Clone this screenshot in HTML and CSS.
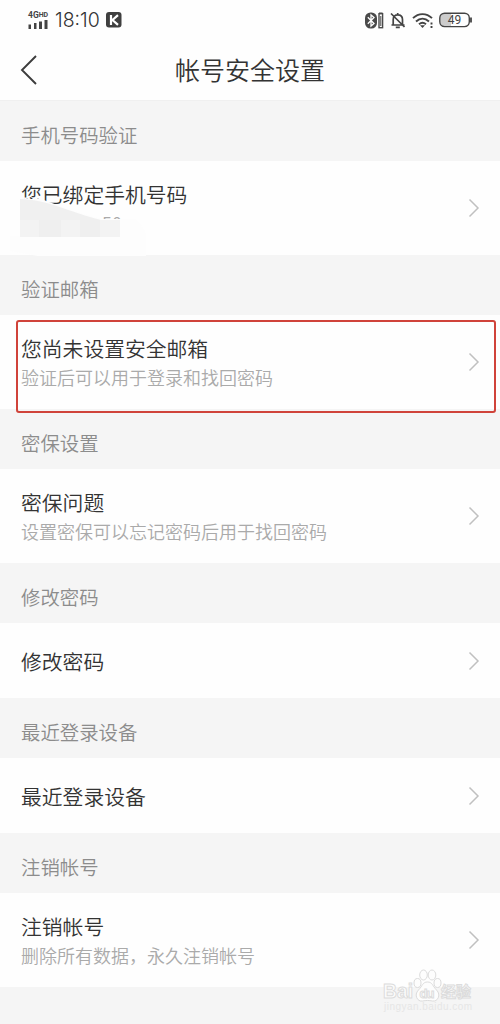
FILE: index.html
```html
<!DOCTYPE html>
<html lang="zh-CN">
<head>
  <meta charset="UTF-8" />
  <title>帐号安全设置</title>
  <link rel="stylesheet" href="styles.css">
</head>
<body>
  <svg width="0" height="0" class="defs">
    <symbol id="chevron" viewBox="0 0 12 20">
      <path d="M1.500 1.500 10 10 1.500 18.500" fill="none" stroke="#c0c0c0" stroke-width="1.500" />
    </symbol>
  </svg>

  <header class="header">
    <div class="status">
      <div class="network">
        <span class="network-type">4G<small>HD</small></span>
        <svg width="20" height="9" viewBox="0 0 20 9" fill="#444">
          <path d="M0.500 4.500H3V9H0.500zM6 3h2.500v6H6zM11 1.500h3V9h-3zM16.500 0h3v9h-3z" />
        </svg>
      </div>
      <span class="time">18:10</span>
      <svg class="app-icon" width="16" height="16" viewBox="0 0 16 16">
        <rect width="15.500" height="15.500" rx="3" fill="#3f3f3f" />
        <path d="M5 3v10M12 3.200 6.500 8 12 12.800" fill="none" stroke="#fff" stroke-width="2.200" />
      </svg>
      <div class="status-right">
        <svg width="19" height="17" viewBox="0 0 19 17">
          <rect x="0" y="0.500" width="12" height="16" rx="5.500" fill="#4a4a4a" />
          <path d="M2.800 5.200 9 11.500 6 14V3l3 2.500-6.200 6.300" fill="none" stroke="#fff" stroke-width="1.300" />
          <rect x="14" y="1.700" width="3.600" height="14" fill="none" stroke="#4a4a4a" stroke-width="1.400" />
          <path d="M15.800 4v10M14 1h3.600" stroke="#4a4a4a" stroke-width="1" />
        </svg>
        <svg class="bell" width="16" height="17" viewBox="0 0 16 17" fill="none" stroke="#444" stroke-width="1.700">
          <path d="M1.500 13h13M3.200 13V7.500C3.200 4.500 5 2.800 7.700 2.800s4.800 1.700 4.800 4.700V13M7.700 1v2M5.800 15.300h4M1 1.500 14.500 15" />
        </svg>
        <svg class="wifi" width="22" height="17" viewBox="0 0 22 17" fill="none" stroke="#444" stroke-width="1.900">
          <path d="M1 6.200C6.500 0.700 14.500 0.700 20 6.200M4 9.500c4-3.800 9-3.800 13 0M7 12.300c2.200-1.900 4.800-1.900 7 0" />
          <path d="M8 13.200h5L10.500 16z" fill="#444" stroke="none" />
          <path d="M19.500 10.500v2M19.500 14v2" />
        </svg>
        <svg width="34" height="16" viewBox="0 0 34 16">
          <path d="M6 1.500h6v13H6A5 5 0 0 1 1.500 8 5 5 0 0 1 6 1.500z" fill="#ccc" />
          <rect x="0.800" y="1.200" width="29.500" height="13.400" rx="4.800" fill="none" stroke="#444" stroke-width="1.400" />
          <path d="M32 5.500v5" stroke="#444" stroke-width="1.800" />
          <text x="15.500" y="12.300" class="battery-text" text-anchor="middle">49</text>
        </svg>
      </div>
    </div>
    <div class="nav">
      <svg class="back" width="18" height="30" viewBox="0 0 18 30">
        <path d="M16 1 2 15l14 14" fill="none" stroke="#3c3c3c" stroke-width="1.900" />
      </svg>
      <h1>帐号安全设置</h1>
    </div>
  </header>

  <main>
    <h2>手机号码验证</h2>
    <div class="row">
      <div class="row-text">
        <div class="title">您已绑定手机号码</div>
        <div class="sub phone">50</div>
      </div>
      <svg class="arrow"><use href="#chevron" /></svg>
      <!-- hides the phone number -->
      <svg class="mask" width="140" height="64" viewBox="0 0 140 64">
        <path d="M10 3h21l30 11 30 9h33q9 6 12 17v20H28L0 55V40h10z" fill="#fdfdfd" />
        <path d="M10 3C40 4 55 15 91 24H110v17H10z" fill="#f0f0f0" />
        <path d="M10 24h100v17H10z" fill="#f3f3f3" />
        <path d="M29 24h22v17H29zM70 24h20v17H70z" fill="#efefef" />
      </svg>
    </div>

    <h2>验证邮箱</h2>
    <div class="row">
      <div class="row-text">
        <div class="title">您尚未设置安全邮箱</div>
        <div class="sub">验证后可以用于登录和找回密码</div>
      </div>
      <svg class="arrow"><use href="#chevron" /></svg>
      <div class="highlight"></div>
    </div>

    <h2>密保设置</h2>
    <div class="row">
      <div class="row-text">
        <div class="title">密保问题</div>
        <div class="sub">设置密保可以忘记密码后用于找回密码</div>
      </div>
      <svg class="arrow"><use href="#chevron" /></svg>
    </div>

    <h2>修改密码</h2>
    <div class="row single">
      <div class="title">修改密码</div>
      <svg class="arrow"><use href="#chevron" /></svg>
    </div>

    <h2>最近登录设备</h2>
    <div class="row single">
      <div class="title">最近登录设备</div>
      <svg class="arrow"><use href="#chevron" /></svg>
    </div>

    <h2>注销帐号</h2>
    <div class="row">
      <div class="row-text">
        <div class="title">注销帐号</div>
        <div class="sub">删除所有数据，永久注销帐号</div>
      </div>
      <svg class="arrow"><use href="#chevron" /></svg>
    </div>
  </main>

  <svg class="watermark" width="96" height="50" viewBox="0 0 96 50">
    <g fill="#fdfdfd" stroke="#dcdcdc" stroke-width="1">
      <text x="2" y="32" class="wm-logo" textLength="30" lengthAdjust="spacingAndGlyphs">Bai</text>
      <ellipse cx="36.500" cy="17" rx="3.500" ry="4.500" />
      <ellipse cx="42.500" cy="9" rx="3.800" ry="5" />
      <ellipse cx="51" cy="9" rx="3.800" ry="5" />
      <ellipse cx="56.500" cy="17" rx="3.500" ry="4.500" />
      <path d="M46.500 16c5 0 5 4 9 8 5 5 1 12-4 11-4-.7-6-.7-10 0-5 1-9-6-4-11 4-4 4-8 9-8z" />
      <text x="38.500" y="32" class="wm-du" textLength="15">du</text>
      <text x="60" y="31" class="wm-cn" textLength="30">经验</text>
    </g>
    <text x="3" y="44" class="wm-url" textLength="88">jingyan.baidu.com</text>
  </svg>
</body>
</html>
```
FILE: styles.css
```css
* {
  box-sizing: border-box;
}
body {
  margin: 0;
  height: 1024px;
  position: relative;
  overflow: hidden;
  background: #f5f5f5;
  color: #333;
  font-family: "Noto Sans CJK SC", sans-serif;
  font-weight: 350;
}
svg {
  display: block;
  flex-shrink: 0;
}
.defs {
  position: absolute;
}
h1, h2 {
  margin: 0;
  font-weight: 350;
}
.header {
  height: 101px;
  background: #fefefe;
  border-bottom: 1px solid #f0f0f0;
}
.status {
  display: flex;
  align-items: center;
  height: 40px;
  padding: 0 27px 0 28px;
}
.network {
  width: 21px;
}
.network-type {
  display: block;
  margin-bottom: 1px;
  font: bold 8.5px/8px Roboto, sans-serif;
  color: #444;
  white-space: nowrap;
}
.network-type small {
  font-size: 7px;
  vertical-align: 1px;
}
.time {
  width: 45px;
  margin-left: 6px;
  font: 19.5px/40px Inter, sans-serif;
  font-weight: 300;
  letter-spacing: 0;
}
.app-icon {
  margin-left: 6px;
}
.status-right {
  display: flex;
  align-items: center;
  margin-left: auto;
}
.bell {
  margin-left: 6px;
}
.wifi {
  margin: 0 5px 0 6px;
}
.battery-text {
  font: 12px Roboto, sans-serif;
  fill: #444;
}
.nav {
  display: grid;
  grid-template-columns: 40px 1fr 40px;
  align-items: center;
  height: 60px;
  padding: 0 20px;
}
h1 {
  font-size: 25px;
  line-height: 58px;
  padding-bottom: 2px;
  text-align: center;
}
h2 {
  height: 60px;
  padding: 7px 21px 0;
  font-size: 19.4px;
  line-height: 53px;
  color: #8c8c8c;
}
.row {
  position: relative;
  display: flex;
  align-items: center;
  justify-content: space-between;
  height: 94px;
  padding: 0 20px 0 21px;
  background: #fefefe;
}
.row.single {
  height: 75px;
}
.title {
  font-size: 20.8px;
  line-height: 30px;
}
.sub {
  font-size: 18px;
  line-height: 28px;
  color: #aaa;
}
.phone {
  padding-left: 81px;
}
.arrow {
  width: 12px;
  height: 20px;
}
.mask {
  position: absolute;
  left: 10px;
  top: 35px;
}
/* red frame around the mailbox row */
.highlight {
  position: absolute;
  top: 5px;
  left: 16px;
  right: 4px;
  height: 93px;
  border: 2px solid #d0433a;
  border-radius: 3px;
  z-index: 1;
}
.watermark {
  position: absolute;
  left: 381px;
  top: 966px;
}
.wm-logo {
  font: bold 20px "Liberation Sans", sans-serif;
}
.wm-du {
  font: bold 13px "Liberation Sans", sans-serif;
}
.wm-cn {
  font: bold 15px "Noto Sans CJK SC", sans-serif;
}
.wm-url {
  font: 10px "Liberation Sans", sans-serif;
  fill: #e6e6e6;
}
```
